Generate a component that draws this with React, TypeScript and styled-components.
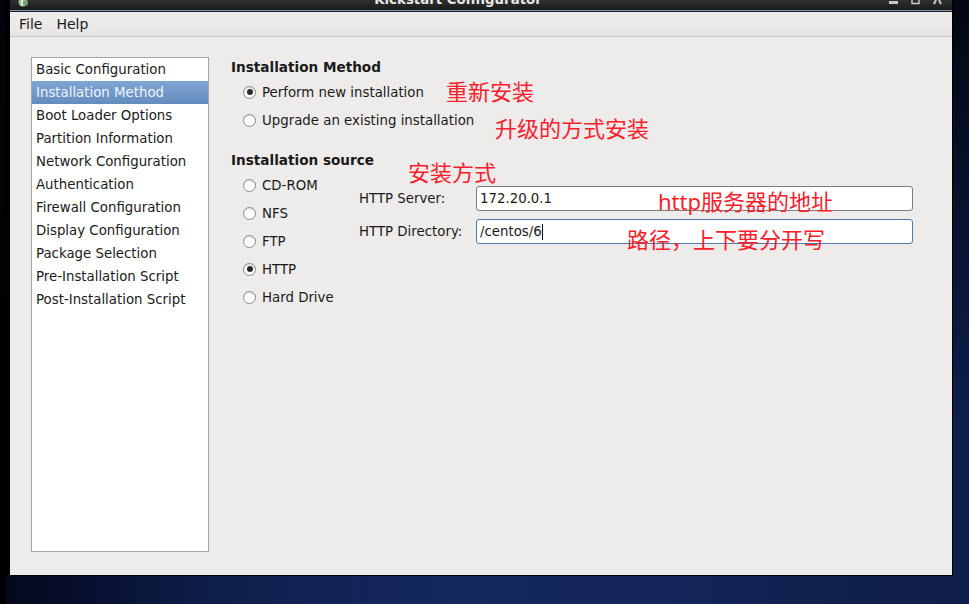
import React from "react";
import styled, { createGlobalStyle } from "styled-components";

const GlobalStyle = createGlobalStyle`
  html, body {
    margin: 0;
    padding: 0;
    height: 100%;
    overflow: hidden;
  }
  body {
    font-family: "DejaVu Sans", sans-serif;
    font-size: 13.33px;
    color: #1a1a1a;
  }
`;

const Desktop = styled.div`
  width: 969px;
  height: 604px;
  position: relative;
  overflow: hidden;
  background:
    linear-gradient(180deg, rgba(2, 5, 12, 0.92) 0%, rgba(2, 5, 12, 0) 70%),
    linear-gradient(90deg, #000 0, #000 5px, #04091a 6px, #081030 90px, #0f1f4c 220px, #15285f 450px, #14265c 620px, #112150 800px, #0f1e4b 100%);
`;

const Screen = styled.div`
  display: flex;
  flex-direction: column;
  width: 942px;
  height: 575px;
  margin-left: 10px;
  background: #edecea;
  box-shadow: 1px 1px 0 #000, -5px 0 0 #000;
`;

const TitleBar = styled.div`
  position: relative;
  height: 10px;
  flex: none;
  overflow: hidden;
  display: flex;
  justify-content: center;
  align-items: flex-end;
  padding-right: 46px;
  background: linear-gradient(#303030, #1a1a1a);
  border-bottom: 1px solid #7d97bc;
`;

const TitleText = styled.span`
  font: bold 13.33px/16px "DejaVu Sans", sans-serif;
  color: #e6e6e6;
  margin-bottom: 2px;
`;

const WindowIcon = styled.svg`
  position: absolute;
  left: 8px;
  top: 0;
`;

const WindowButtons = styled.div`
  position: absolute;
  right: 10px;
  top: 0;
  display: flex;
  gap: 13px;
`;

const MenuBar = styled.div`
  display: flex;
  flex: none;
  height: 24px;
  padding-left: 9px;
  gap: 14px;
  align-items: center;
  background: linear-gradient(#efeeec, #e6e5e3);
  border-top: 1px solid #1e1e1e;
  border-bottom: 1px solid #c6c5c3;
`;

const MenuItem = styled.span`
  font-size: 14px;
`;

const Body = styled.div`
  flex: 1;
  display: flex;
  padding: 20px 39px 23px 21px;
  min-height: 0;
`;

const Sidebar = styled.ul`
  list-style: none;
  flex: none;
  width: 176px;
  margin: 0;
  padding: 0;
  background: #fff;
  border: 1px solid #a5a4a2;
`;

const SidebarItem = styled.li<{ $active?: boolean }>`
  height: 23px;
  line-height: 23px;
  padding-left: 4px;
  white-space: nowrap;
  color: ${({ $active }) => ($active ? "#eef3fa" : "#1a1a1a")};
  background: ${({ $active }) =>
    $active ? "linear-gradient(#7fa5d3, #648dbf)" : "transparent"};
`;

const Content = styled.div`
  flex: 1;
  padding-left: 22px;
  display: flex;
  flex-direction: column;
`;

const SectionTitle = styled.div`
  font-weight: bold;
  font-size: 13.6px;
  line-height: 20px;
`;

const MethodSection = styled.div`
  display: flex;
  flex-direction: column;
  margin-bottom: 16px;
`;

const MethodOptions = styled.div`
  display: flex;
  flex-direction: column;
  margin-top: 1px;
`;

const RadioRow = styled.label`
  display: flex;
  align-items: center;
  height: 28px;
  padding-left: 12px;
  gap: 6px;
  white-space: nowrap;
`;

const RadioCircle = styled.span<{ $checked?: boolean }>`
  width: 13px;
  height: 13px;
  box-sizing: border-box;
  border-radius: 50%;
  flex: none;
  display: flex;
  align-items: center;
  justify-content: center;
  border: 1px solid #8a8987;
  background: #fff;
  box-shadow: inset 0 1px 1px #d8d8d8;

  &::after {
    content: "";
    display: ${({ $checked }) => ($checked ? "block" : "none")};
    width: 6px;
    height: 6px;
    border-radius: 50%;
    background: #2a2a2a;
  }
`;

const SourceRow = styled.div`
  display: flex;
  align-items: flex-start;
  margin-top: 1px;
`;

const SourceList = styled.div`
  display: flex;
  flex-direction: column;
  width: 128px;
  flex: none;
`;

const HttpForm = styled.div`
  flex: 1;
  display: grid;
  grid-template-columns: 117px 1fr;
  row-gap: 8px;
  align-items: center;
  padding-top: 15px;
`;

const FieldLabel = styled.span`
  white-space: nowrap;
`;

const TextField = styled.div<{ $focused?: boolean }>`
  height: 23px;
  padding-left: 3px;
  background: #fff;
  border-radius: 3px;
  border: 1px solid ${({ $focused }) => ($focused ? "#4d7bb0" : "#7d7c7a")};
  display: flex;
  align-items: center;
`;

const Caret = styled.span`
  display: inline-block;
  width: 1px;
  height: 16px;
  background: #111;
`;

const Note = styled.span<{ $x: number; $y: number }>`
  position: absolute;
  left: ${({ $x }) => $x}px;
  top: ${({ $y }) => $y}px;
  font-family: "Noto Sans", "Noto Sans CJK SC", sans-serif;
  font-size: 22px;
  line-height: 30px;
  color: #f5202c;
  white-space: nowrap;
`;

const navItems = [
  "Basic Configuration",
  "Installation Method",
  "Boot Loader Options",
  "Partition Information",
  "Network Configuration",
  "Authentication",
  "Firewall Configuration",
  "Display Configuration",
  "Package Selection",
  "Pre-Installation Script",
  "Post-Installation Script",
];

const sources = ["CD-ROM", "NFS", "FTP", "HTTP", "Hard Drive"];

const App: React.FC = () => (
  <Desktop>
    <GlobalStyle />
    <Screen>
      <TitleBar>
        <WindowIcon width="12" height="8" viewBox="0 0 12 8">
          <circle cx="5" cy="2" r="4.5" fill="#a9b3a8" />
          <circle cx="7.5" cy="3" r="2.5" fill="#6fa56c" />
          <rect x="3" y="0" width="2" height="6" fill="#e2e4df" />
        </WindowIcon>
        <TitleText>Kickstart Configurator</TitleText>
        <WindowButtons>
          <svg width="9" height="5" viewBox="0 0 9 5">
            <rect x="0" y="1" width="9" height="3" fill="#c9c9c9" />
          </svg>
          <svg width="9" height="5" viewBox="0 0 9 5">
            <path d="M1 0V3.5H8V0" fill="none" stroke="#c9c9c9" strokeWidth="1.4" />
          </svg>
          <svg width="9" height="5" viewBox="0 0 9 5">
            <path d="M1 4L3 0M8 4L6 0" fill="none" stroke="#c9c9c9" strokeWidth="2" />
          </svg>
        </WindowButtons>
      </TitleBar>
      <MenuBar>
        <MenuItem>File</MenuItem>
        <MenuItem>Help</MenuItem>
      </MenuBar>
      <Body>
        <Sidebar>
          {navItems.map((item) => (
            <SidebarItem key={item} $active={item === "Installation Method"}>
              {item}
            </SidebarItem>
          ))}
        </Sidebar>
        <Content>
          <MethodSection>
            <SectionTitle>Installation Method</SectionTitle>
            <MethodOptions>
              <RadioRow>
                <RadioCircle $checked />
                Perform new installation
              </RadioRow>
              <RadioRow>
                <RadioCircle />
                Upgrade an existing installation
              </RadioRow>
            </MethodOptions>
          </MethodSection>
          <SectionTitle>Installation source</SectionTitle>
          <SourceRow>
            <SourceList>
              {sources.map((source) => (
                <RadioRow key={source}>
                  <RadioCircle $checked={source === "HTTP"} />
                  {source}
                </RadioRow>
              ))}
            </SourceList>
            <HttpForm>
              <FieldLabel>HTTP Server:</FieldLabel>
              <TextField>172.20.0.1</TextField>
              <FieldLabel>HTTP Directory:</FieldLabel>
              <TextField $focused>
                /centos/6
                <Caret />
              </TextField>
            </HttpForm>
          </SourceRow>
        </Content>
      </Body>
    </Screen>
    <Note $x={446} $y={76}>重新安装</Note>
    <Note $x={495} $y={113}>升级的方式安装</Note>
    <Note $x={408} $y={157}>安装方式</Note>
    <Note $x={658} $y={186}>http服务器的地址</Note>
    <Note $x={627} $y={224}>路径，上下要分开写</Note>
  </Desktop>
);

export default App;
